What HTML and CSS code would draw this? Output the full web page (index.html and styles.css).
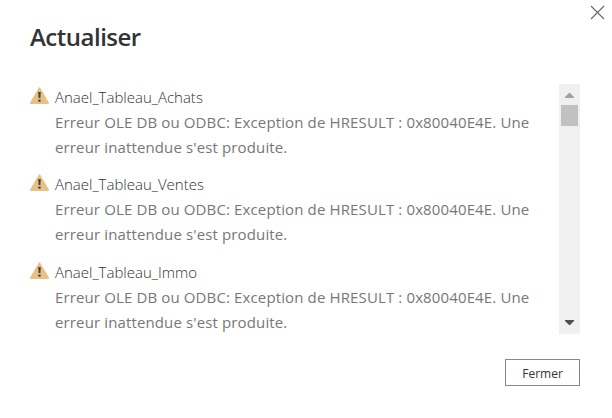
FILE: index.html
```html
<!DOCTYPE html>
<html lang="fr">

<head>
    <meta charset="UTF-8">
    <meta name="viewport" content="width=device-width, initial-scale=1.0">
    <title>Actualiser</title>
    <link rel="stylesheet" href="styles.css">
</head>

<body>
    <div class="dialog">
        <button class="close-button" aria-label="Fermer la fenêtre">
            <svg width="15" height="15" viewBox="0 0 15 15">
                <path d="M1 1 14 14M14 1 1 14" />
            </svg>
        </button>

        <h1>Actualiser</h1>

        <div class="content">
            <ul class="error-list">
                <li class="error-item">
                    <svg class="warning-icon" width="20" height="18" viewBox="0 0 20 18">
                        <path class="triangle" d="M9.5 1.4 18 15.9H1z" />
                        <path class="mark" d="M8.2 5h2.6l-.4 6H8.6zM8.4 12.4h2.2v2.4H8.4z" />
                    </svg>
                    <div class="error-text">
                        <p class="table-name">Anael_Tableau_Achats</p>
                        <p class="message">Erreur OLE DB ou ODBC: Exception de HRESULT : 0x80040E4E. Une erreur inattendue s'est produite.</p>
                    </div>
                </li>
                <li class="error-item">
                    <svg class="warning-icon" width="20" height="18" viewBox="0 0 20 18">
                        <path class="triangle" d="M9.5 1.4 18 15.9H1z" />
                        <path class="mark" d="M8.2 5h2.6l-.4 6H8.6zM8.4 12.4h2.2v2.4H8.4z" />
                    </svg>
                    <div class="error-text">
                        <p class="table-name">Anael_Tableau_Ventes</p>
                        <p class="message">Erreur OLE DB ou ODBC: Exception de HRESULT : 0x80040E4E. Une erreur inattendue s'est produite.</p>
                    </div>
                </li>
                <li class="error-item">
                    <svg class="warning-icon" width="20" height="18" viewBox="0 0 20 18">
                        <path class="triangle" d="M9.5 1.4 18 15.9H1z" />
                        <path class="mark" d="M8.2 5h2.6l-.4 6H8.6zM8.4 12.4h2.2v2.4H8.4z" />
                    </svg>
                    <div class="error-text">
                        <p class="table-name">Anael_Tableau_Immo</p>
                        <p class="message">Erreur OLE DB ou ODBC: Exception de HRESULT : 0x80040E4E. Une erreur inattendue s'est produite.</p>
                    </div>
                </li>
            </ul>

            <div class="scrollbar">
                <svg class="arrow-up" width="9" height="5" viewBox="0 0 9 5">
                    <path d="M4 0h1l4 4v1H0V4z" />
                </svg>
                <div class="thumb"></div>
                <svg class="arrow-down" width="9" height="5" viewBox="0 0 9 5">
                    <path d="M0 0h9v1L5 5H4L0 1z" />
                </svg>
            </div>
        </div>

        <div class="footer">
            <button class="button">Fermer</button>
        </div>
    </div>
</body>

</html>
```
FILE: styles.css
```css
* {
    box-sizing: border-box;
}

body {
    margin: 0;
    background: #fff;
    font-family: "Segoe UI", "Open Sans", "Noto Sans", sans-serif;
}

.dialog {
    position: relative;
    width: 612px;
    height: 418px;
    padding: 20px 32px 0 30px;
    overflow: hidden;
}

.close-button {
    position: absolute;
    top: 5px;
    right: 7px;
    width: 15px;
    height: 15px;
    padding: 0;
    border: none;
    background: none;
    cursor: pointer;
}

.close-button svg {
    display: block;
    fill: none;
    stroke: #666;
    stroke-width: 1.1;
}

h1 {
    margin: 0 0 30px;
    color: #333;
    font-size: 24px;
    font-weight: 600;
    line-height: 34px;
    letter-spacing: -0.5px;
}

.content {
    display: flex;
    width: 550px;
    height: 250px;
}

.error-list {
    flex: 1;
    margin: 0;
    padding: 1px 20px 0 0;
    list-style: none;
    overflow: hidden;
}

.error-item {
    display: flex;
    margin-bottom: 12.3px;
}

.warning-icon {
    flex: none;
    margin: 2px 5px 0 0;
}

.triangle {
    fill: #e8c184;
    stroke: #e8c184;
    stroke-width: 2;
    stroke-linejoin: round;
}

.mark {
    fill: #444;
}

.error-text {
    flex: 1;
}

.error-text p {
    margin: 0;
    line-height: 25px;
}

.table-name {
    color: #333;
    font-size: 15px;
    font-weight: 300;
}

.message {
    color: #777;
    font-size: 15px;
    letter-spacing: 0.13px;
}

.scrollbar {
    display: flex;
    flex-direction: column;
    align-items: center;
    width: 21px;
    background: #f0f0f0;
}

.arrow-up {
    margin: 9px 0 7px;
    fill: #a0a0a0;
}

.thumb {
    width: 17px;
    height: 21px;
    background: #c1c1c1;
}

.arrow-down {
    margin: auto 0 9px;
    fill: #505050;
}

.footer {
    display: flex;
    justify-content: flex-end;
    width: 550px;
    margin-top: 25px;
}

.button {
    width: 75px;
    height: 27px;
    padding: 2px 0 0;
    border: 1px solid #888;
    background: #fff;
    color: #333;
    font-family: inherit;
    font-size: 12px;
    cursor: pointer;
}
```
